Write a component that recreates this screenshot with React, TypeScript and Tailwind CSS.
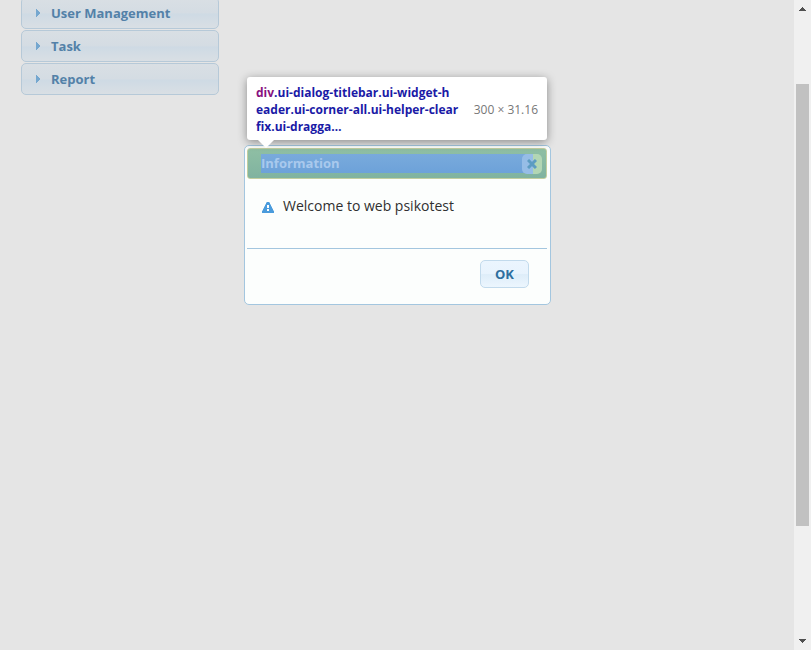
import React from "react";

const menuItems = ["User Management", "Task", "Report"];

function Sidebar() {
  return (
    <nav className="-mt-[3px] ml-[21px] flex w-[198px] flex-col gap-px">
      {menuItems.map((label) => (
        <button
          key={label}
          type="button"
          className="flex h-8 items-center rounded-[5px] border border-[#b6c9d8] bg-[linear-gradient(to_bottom,#d9dfe4_0%,#d4dce3_50%,#cedae4_53%,#d9dfe4_100%)] pl-3.5 text-left text-[13px] leading-4 font-bold text-[#5381a8]"
        >
          <svg width="5" height="8" viewBox="0 0 5 8" className="mr-2.5 shrink-0" fill="#75a7cf" aria-hidden="true">
            <path d="M0 0h1v1h1v1h1v1h1v2h-1v1h-1v1h-1v1h-1z" />
          </svg>
          {label}
        </button>
      ))}
    </nav>
  );
}

function Dialog() {
  return (
    <section
      role="dialog"
      aria-labelledby="dialog-title"
      className="absolute top-[145px] left-[244px] w-[307px] rounded-[5px] border border-[#a3c6df] bg-[#fcfefd] pt-0.5 pr-[3px] pb-4 pl-0.5"
    >
      <header className="relative flex h-[31px] items-center rounded-[3px] border border-[#c3ce9f] bg-[linear-gradient(to_bottom,#8fbfa4,#80b3a0)] pr-[13px] pl-[13px]">
        <h2
          id="dialog-title"
          className="h-[19px] flex-1 bg-[linear-gradient(to_bottom,#79aadc,#6da2d9)] text-[13px] leading-[19px] font-bold text-[#a9c9ed]"
        >
          Information
        </h2>
        <button
          type="button"
          aria-label="Close"
          className="absolute top-[5px] right-1 flex size-5 items-center justify-center rounded-[5px] bg-[linear-gradient(to_right,#96bde6_0_11px,#b2d6b4_11px_20px)]"
        >
          <svg width="10" height="10" viewBox="0 0 10 10" fill="none" stroke="#5c9cc2" strokeWidth="3" aria-hidden="true">
            <path d="M1 1l8 8M9 1l-8 8" />
          </svg>
        </button>
      </header>
      <p className="flex h-[69px] items-start pt-[18px] pl-[15px] text-sm leading-[18px] text-[#303030]">
        <svg width="12" height="11" viewBox="0 0 12 11" className="mt-[5px] mr-[9px] shrink-0" aria-hidden="true">
          <path d="M5 0h2l1 1v1l1 1v1l1 1v1l1 1v1l1 1v2H0V9l1-1V7l1-1V5l1-1V3l1-1V1z" fill="#4a9bdc" />
          <path d="M5 3h2v3H5zM5 7h2v2H5z" fill="#fff" />
        </svg>
        Welcome to web psikotest
      </p>
      <footer className="flex justify-end border-t border-[#a3c6df] pt-[11px] pr-[18px]">
        <button
          type="button"
          className="h-7 w-[49px] rounded-[5px] border border-[#c2daec] bg-[linear-gradient(to_bottom,#ebf5fe_0%,#e8f3fd_50%,#deedf9_52%,#ecf6fe_100%)] text-[13px] leading-4 font-bold text-[#2e6e9e]"
        >
          OK
        </button>
      </footer>
    </section>
  );
}

function InspectorTooltip() {
  return (
    <div
      role="tooltip"
      className="absolute top-[77px] left-[247px] flex w-[300px] items-center justify-between rounded-[3px] bg-white px-[9px] pt-[7px] pb-[5px] text-[12px] leading-[17px] shadow-[0_2px_10px_rgba(0,0,0,0.4)]"
    >
      <p className="font-bold whitespace-nowrap text-[#1a1aa6]">
        <span className="text-[#881280]">div</span>.ui-dialog-titlebar.ui-widget-h
        <br />
        eader.ui-corner-all.ui-helper-clear
        <br />
        fix.ui-dragga…
      </p>
      <span className="whitespace-nowrap text-[#777777]">300 × 31.16</span>
      <svg width="16" height="8" viewBox="0 0 16 8" className="absolute top-full left-[11px]" fill="#fff" aria-hidden="true">
        <path d="M0 0h16l-8 8z" />
      </svg>
    </div>
  );
}

function ScrollRail() {
  return (
    <div aria-hidden="true" className="flex w-[17px] shrink-0 flex-col items-center bg-[#f0f0f0]">
      <svg width="7" height="4" viewBox="0 0 7 4" className="mt-[7px] shrink-0" fill="#505050">
        <path d="M3 0h1v1h1v1h1v1h1v1H0V3h1V2h1V1h1z" />
      </svg>
      <div className="flex w-[13px] flex-1 flex-col pt-[73px] pb-[113px]">
        <div className="flex-1 bg-[#c1c1c1]" />
      </div>
      <svg width="7" height="4" viewBox="0 0 7 4" className="mb-[7px] shrink-0" fill="#505050">
        <path d="M0 0h7v1H6v1H5v1H4v1H3V3H2V2H1V1H0z" />
      </svg>
    </div>
  );
}

export default function App() {
  return (
    <div className="relative flex h-screen overflow-hidden bg-[#e5e5e5] font-['Open_Sans','Noto_Sans',sans-serif]">
      <main className="min-w-0 flex-1">
        <Sidebar />
      </main>
      <ScrollRail />
      <Dialog />
      <InspectorTooltip />
    </div>
  );
}
